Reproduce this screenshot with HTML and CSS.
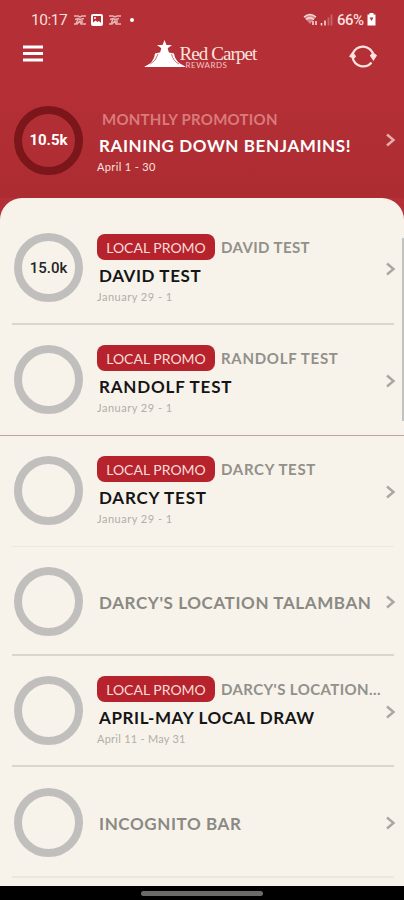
FILE: index.html
```
<!DOCTYPE html>
<html lang="en">
    <head>
        <meta charset="utf-8">
        <meta name="viewport" content="width=device-width, initial-scale=1.0">
        <title>Red Carpet Rewards</title>
        <link rel="stylesheet" href="styles.css">
    </head>
    <body>
        <svg class="defs" width="0" height="0">
            <symbol id="arrow" viewBox="0 0 12 16">
                <path d="M2 2.5 L8.5 8 L2 13.5" fill="none" stroke="currentColor" stroke-width="2.4"/>
            </symbol>
            <symbol id="notice" viewBox="0 0 14 12">
                <path d="M1 2h4l2 1 2-1h4M2 5.500l3-1 2 1 4-1M1 10h3l3-3 1 3h5M5 5l-2 5M9 6v3" fill="none" stroke="currentColor" stroke-width="1.5"/>
            </symbol>
        </svg>
        <div class="top">
            <div class="status">
                <span class="clock">10:17</span>
                <svg class="note" width="14" height="12"><use href="#notice"/></svg>
                <svg class="photo" width="12" height="12" viewBox="0 0 12 12">
                    <rect x="1" y="1" width="10" height="10" rx="1" fill="none" stroke="currentColor" stroke-width="2"/>
                    <path d="M2 10V8.500l2.500-2 2 1.500L8 7l2 2v1z" fill="currentColor"/>
                    <circle cx="4" cy="4" r="1" fill="currentColor"/>
                </svg>
                <svg class="note" width="14" height="12"><use href="#notice"/></svg>
                <span class="dot"></span>
                <svg class="signal" width="30" height="14" viewBox="0 0 30 14">
                    <path d="M1 4Q7 -1 13 4L7 11z" fill="currentColor" opacity=".5"/>
                    <path d="M1 4Q7 -1 13 4M3 6.500Q7 3 11 6.500" fill="none" stroke="currentColor" stroke-width="1.300"/>
                    <path d="M10 8v4M13 8v4M18.500 10v2.500M22 7.500v5" stroke="currentColor" stroke-width="1.500"/>
                    <path d="M25.500 4.500v8M28.500 1.500v11" stroke="currentColor" stroke-width="1.800" opacity=".3"/>
                </svg>
                <span class="percent">66%</span>
                <svg class="battery" width="9" height="13" viewBox="0 0 9 13">
                    <path d="M2.500 0h4v1.500H8.500V12.500H.5V1.500h2z" fill="currentColor"/>
                    <path d="M2.500 4.500h4L4.500 8z" fill="#b42f36"/>
                </svg>
            </div>
            <div class="bar">
                <svg class="menu" width="20" height="17" viewBox="0 0 20 17">
                    <path d="M0 2h20M0 8.500h20M0 15h20" stroke="currentColor" stroke-width="3"/>
                </svg>
                <div class="logo">
                    <svg width="42" height="30" viewBox="0 0 42 30">
                        <path d="M20.500 1l2 5h5.500l-4.300 3.300 1.600 5.700H15.700l1.600-5.700L13 6H18.500z" fill="currentColor"/>
                        <path d="M11 14.500Q20 11.500 30 14.500Q31 21 36 24.500L42 28H0L6 24.500Q10 21 11 14.500z" fill="currentColor"/>
                        <path d="M14 15Q12 22 6.500 25M27.500 15Q29 22 35 25" fill="none" stroke="#b42f36" stroke-width=".7"/>
                    </svg>
                    <div class="name">
                        <span class="red">Red Carpet</span>
                        <span class="rewards">REWARDS</span>
                    </div>
                </div>
                <svg class="refresh" width="28" height="26" viewBox="0 0 28 26">
                    <path d="M3.600 11A10.800 10.800 0 0 1 24.500 12.500M22.500 19.500A10.800 10.800 0 0 1 3.700 15" fill="none" stroke="currentColor" stroke-width="2.200"/>
                    <path d="M0 13.500l3.600-5 3.600 5-2.500 2.500zM20.800 12.500l2-2h3l2.200 2L24.400 18z" fill="currentColor"/>
                </svg>
            </div>
            <div class="row monthly">
                <div class="ring"><span>10.5k</span></div>
                <div class="text">
                    <div class="line"><span class="place">MONTHLY PROMOTION</span></div>
                    <div class="title">RAINING DOWN BENJAMINS!</div>
                    <div class="date">April 1 - 30</div>
                </div>
                <svg class="arrow" width="12" height="16"><use href="#arrow"/></svg>
            </div>
        </div>
        <div class="list">
            <div class="row promo first">
                <div class="ring"><span>15.0k</span></div>
                <div class="text">
                    <div class="line"><span class="badge">LOCAL PROMO</span><span class="place">DAVID TEST</span></div>
                    <div class="title">DAVID TEST</div>
                    <div class="date">January 29 - 1</div>
                </div>
                <svg class="arrow" width="12" height="16"><use href="#arrow"/></svg>
            </div>
            <div class="row promo dark">
                <div class="ring"></div>
                <div class="text">
                    <div class="line"><span class="badge">LOCAL PROMO</span><span class="place wide">RANDOLF TEST</span></div>
                    <div class="title wide">RANDOLF TEST</div>
                    <div class="date">January 29 - 1</div>
                </div>
                <svg class="arrow" width="12" height="16"><use href="#arrow"/></svg>
            </div>
            <div class="row promo faint">
                <div class="ring"></div>
                <div class="text">
                    <div class="line"><span class="badge">LOCAL PROMO</span><span class="place wide">DARCY TEST</span></div>
                    <div class="title wide">DARCY TEST</div>
                    <div class="date">January 29 - 1</div>
                </div>
                <svg class="arrow" width="12" height="16"><use href="#arrow"/></svg>
            </div>
            <div class="row short">
                <div class="ring"></div>
                <div class="text"><div class="title gray">DARCY'S LOCATION TALAMBAN</div></div>
                <svg class="arrow" width="12" height="16"><use href="#arrow"/></svg>
            </div>
            <div class="row promo">
                <div class="ring"></div>
                <div class="text">
                    <div class="line"><span class="badge">LOCAL PROMO</span><span class="place">DARCY'S LOCATION...</span></div>
                    <div class="title">APRIL-MAY LOCAL DRAW</div>
                    <div class="date range">April 11 - May 31</div>
                </div>
                <svg class="arrow" width="12" height="16"><use href="#arrow"/></svg>
            </div>
            <div class="row last">
                <div class="ring"></div>
                <div class="text"><div class="title gray">INCOGNITO BAR</div></div>
                <svg class="arrow" width="12" height="16"><use href="#arrow"/></svg>
            </div>
            <div class="scroll"></div>
        </div>
        <div class="nav"><div class="handle"></div></div>
    </body>
</html>
```
FILE: styles.css
```
* {
    box-sizing: border-box;
}
body {
    margin: 0;
    height: 900px;
    overflow: hidden;
    display: flex;
    flex-direction: column;
    background-color: #b42f36;
    font-family: Lato, sans-serif;
    color: white;
}
svg {
    display: block;
    flex-shrink: 0;
}
.defs {
    position: absolute;
}
.top {
    height: 198px;
    flex-shrink: 0;
    background: linear-gradient(#b42f36 50%, #ac2c32);
}
.status {
    height: 38px;
    padding: 1px 28px 0 31px;
    display: flex;
    align-items: center;
    font-family: Roboto, sans-serif;
    color: #f9dfdc;
}
.clock {
    width: 42px;
    font-size: 15.5px;
    letter-spacing: -0.5px;
}
.note {
    opacity: .75;
}
.photo {
    margin: 0 5px 0 4px;
    color: white;
}
.dot {
    width: 4px;
    height: 4px;
    margin-left: 8px;
    border-radius: 50%;
    background-color: white;
}
.signal {
    margin-left: auto;
    margin-right: 4px;
}
.percent {
    width: 30px;
    font-size: 15px;
    font-weight: 500;
    letter-spacing: -0.5px;
}
.battery {
    color: white;
}
.bar {
    height: 44px;
    padding: 0 27px 0 23px;
    display: flex;
    justify-content: space-between;
}
.menu {
    margin-top: 7px;
}
.logo {
    display: flex;
    width: 113px;
    margin-left: 8px;
}
.logo svg {
    margin-top: 1px;
}
.name {
    display: flex;
    flex-direction: column;
    margin-left: -6px;
    white-space: nowrap;
}
.red {
    font-family: "Liberation Serif", serif;
    font-size: 19px;
    line-height: 20px;
    margin-top: 6px;
    letter-spacing: -0.9px;
    color: #fbe3df;
}
.rewards {
    margin: -3px 0 0 6px;
    font-size: 8px;
    line-height: 8px;
    letter-spacing: 0.5px;
    color: #f3c7c4;
}
.refresh {
    margin-top: 5px;
    color: #fbe3df;
}
.list {
    position: relative;
    height: 688px;
    flex-shrink: 0;
    padding-top: 15px;
    border-radius: 22px 22px 0 0;
    background-color: #f7f3eb;
}
.row {
    height: 111px;
    display: flex;
    align-items: center;
    padding: 0 6px 0 14px;
    background: linear-gradient(#d9d6d0, #d9d6d0) 12px 100% / 382px 2px no-repeat;
}
.first {
    height: 112px;
}
.promo .ring {
    margin-bottom: 3px;
}
.monthly {
    height: 116px;
    background: none;
}
.dark {
    background: linear-gradient(#c4a19d, #c4a19d) 0 100% / 404px 1px no-repeat;
}
.faint {
    background: linear-gradient(#ece8e1, #ece8e1) 12px 100% / 382px 1px no-repeat;
}
.short {
    height: 109px;
}
.last {
    background-image: linear-gradient(#eee5dc, #eee5dc);
}
.ring {
    width: 69px;
    height: 69px;
    flex-shrink: 0;
    display: flex;
    align-items: center;
    justify-content: center;
    border: 8px solid #c0bfbd;
    border-radius: 50%;
    font-family: Roboto, sans-serif;
    font-size: 15px;
    font-weight: 500;
    color: #252525;
}
.monthly .ring {
    border-color: #7b161a;
    color: white;
    font-weight: bold;
}
.text {
    width: 296px;
    margin-left: 14px;
    flex-shrink: 0;
    white-space: nowrap;
}
.line {
    display: flex;
    align-items: center;
    height: 26px;
}
.badge {
    width: 118px;
    height: 26px;
    margin-right: 6px;
    border-radius: 8px;
    background-color: #b7232c;
    color: #f8dcda;
    font-size: 14px;
    line-height: 28px;
    text-align: center;
}
.place {
    font-size: 15px;
    line-height: 28px;
    letter-spacing: 0.4px;
    font-weight: bold;
    color: #92908a;
}
.place.wide {
    letter-spacing: 0.7px;
}
.monthly .place {
    padding-left: 5px;
    letter-spacing: 0.25px;
    color: #d97b7c;
}
.title {
    padding-left: 2px;
    margin-top: 4px;
    font-size: 17px;
    line-height: 24px;
    letter-spacing: 0.6px;
    font-weight: bold;
    color: #151515;
}
.title.wide {
    letter-spacing: 0.8px;
}
.monthly .title {
    margin-top: 2px;
    color: white;
}
.text .gray {
    margin-top: 2px;
    color: #8b8983;
}
.date {
    font-size: 11px;
    line-height: 17px;
    letter-spacing: 0.5px;
    color: #b1aea7;
}
.date.range {
    letter-spacing: 0.25px;
}
.monthly .date {
    letter-spacing: 0.35px;
    color: #fbe3df;
}
.arrow {
    margin-left: -8px;
    color: #aaa7a1;
}
.monthly .arrow {
    color: #e2b0a8;
}
.scroll {
    position: absolute;
    right: 0;
    top: 40px;
    width: 2px;
    height: 183px;
    background-color: #c0c3bf;
}
.nav {
    height: 14px;
    background-color: black;
    display: flex;
    justify-content: center;
    align-items: center;
}
.handle {
    width: 122px;
    height: 5px;
    border-radius: 3px;
    background-color: #6b6b6b;
}
```
